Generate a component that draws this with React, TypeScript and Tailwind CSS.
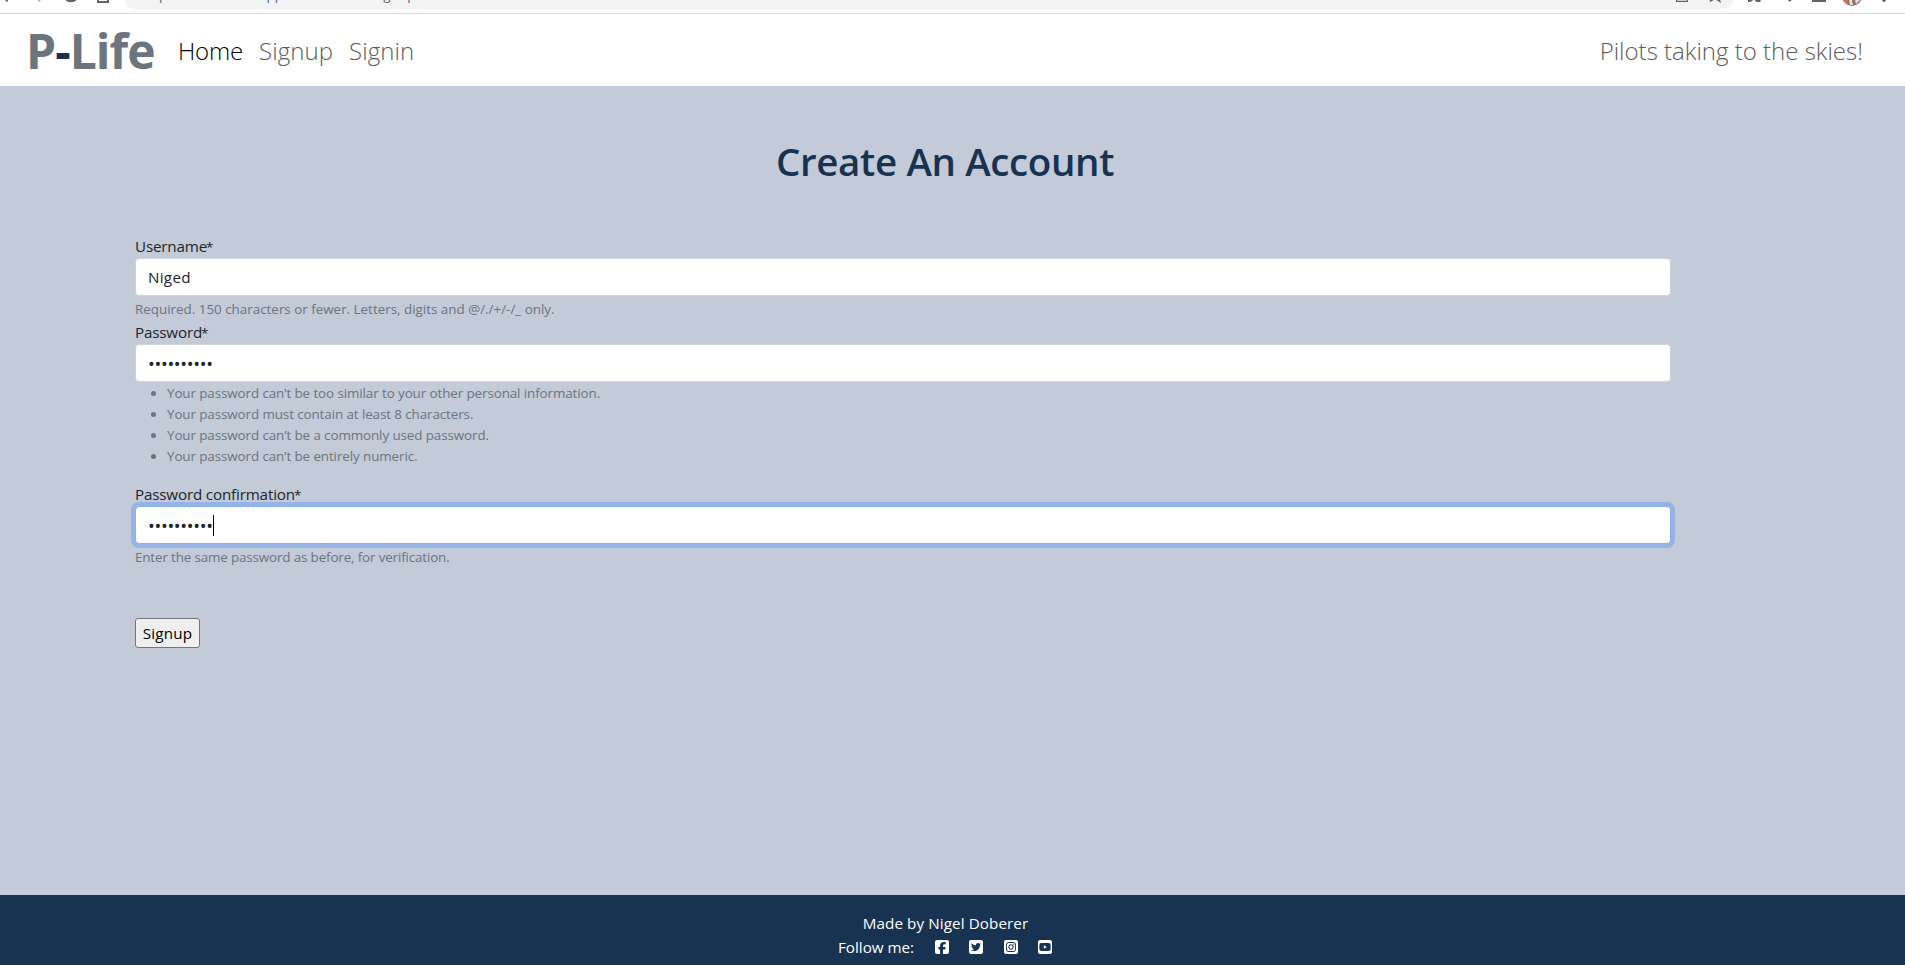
import React from "react";
import type { ReactNode } from "react";
import { FaSquareFacebook, FaSquareTwitter, FaSquareInstagram, FaSquareYoutube } from "react-icons/fa6";

const hints = [
  "Your password can’t be too similar to your other personal information.",
  "Your password must contain at least 8 characters.",
  "Your password can’t be a commonly used password.",
  "Your password can’t be entirely numeric.",
];

const socials = [FaSquareFacebook, FaSquareTwitter, FaSquareInstagram, FaSquareYoutube];

function BrowserBar() {
  return (
    <div className="flex h-[14px] shrink-0 overflow-hidden border-b border-[#d9dbde] bg-white">
      <svg className="h-[9px] w-[125px] shrink-0" viewBox="0 0 125 9" fill="none" stroke="#5f6368" strokeWidth="2">
        <path d="M4 -3L7.500 1.500" />
        <path d="M42 -3L38.500 1.500" stroke="#b5b8bb" />
        <path d="M65.500 0H76.500C74 3 68 3 65.500 0Z" fill="#5f6368" stroke="none" />
        <path d="M98 -6V2H108V-6" />
      </svg>
      <div className="flex h-[9px] w-[1608px] shrink-0 overflow-hidden rounded-b-[14px] bg-[#f1f3f4]">
        <span className="-mt-[14px] ml-[34px] block w-max text-[13.4px] leading-[18px] tracking-[0.06px] text-[#5f6368]">
          pilot-life.herokuapp.com/account/signup/
        </span>
        <svg className="mr-[8px] ml-auto h-[9px] w-[52px]" viewBox="0 0 52 9" fill="none" stroke="#5f6368" strokeWidth="1.2">
          <path d="M3.6 -4V1.4H14.4V-4" />
          <path d="M37 1.500L38.500 -2M37 1.500L42 -1.500L47 1.500L45.500 -2" />
        </svg>
      </div>
      <svg className="h-[9px] w-[172px] shrink-0" viewBox="0 0 172 9" fill="#5f6368">
        <path d="M15 0h4.500v1.200h-1.200l-.8.9h-2.500zM22 0h5.500v2.100h-3.500l-.8-.9h-1.200z" />
        <path d="M55 0h3.500l-1 1.500h-1.500z" />
        <path d="M79 0h14v2h-14z" />
        <circle cx="119" cy="-4" r="10" fill="#8c7168" />
        <path d="M110 0h4l1 4c-2 0-4-2-5-4z" fill="#d9774f" />
        <path d="M116 0h3l1 5h-3zM122 0h5l-4 4z" fill="#e6dfd4" />
        <circle cx="151" cy="0" r="1.900" />
      </svg>
    </div>
  );
}

function Dots() {
  return <span className="pt-[2px] text-[18px] leading-6 tracking-[-0.3px]">••••••••••</span>;
}

function Label({ children }: { children: ReactNode }) {
  return <div className="h-6 text-[15.2px] leading-6 tracking-[-0.17px] text-[#212529]">{children}<span className="-ml-[1px] text-[13.500px]">*</span></div>;
}

export default function App() {
  return (
    <div className="flex h-[965px] w-[1905px] flex-col overflow-hidden bg-[#c3cad8] font-['Open_Sans','Noto_Sans',sans-serif] text-[#212529]">
      <BrowserBar />
      <nav className="flex h-[72px] shrink-0 items-center bg-white">
        <span className="ml-[26px] w-[152px] pt-[2px] text-[48px] font-bold tracking-[-0.95px] text-[#6c757d]">P<span className="text-[#183252]">-</span>Life</span>
        <span className="w-[81px] pt-px text-[24px] font-light tracking-[-0.2px] text-black">Home</span>
        <span className="w-[90px] pt-px text-[24px] font-light tracking-[0.1px] text-[#5c5c5c]">Signup</span>
        <span className="pt-px text-[24px] font-light tracking-[0.1px] text-[#5c5c5c]">Signin</span>
        <span className="mr-[42px] ml-auto pt-px text-[24px] font-light text-[#5c5c5c]">Pilots taking to the skies!</span>
      </nav>
      <main className="flex flex-1 flex-col">
        <h1 className="mt-[51px] ml-[776px] text-[38.5px] leading-[48px] font-semibold tracking-[-0.36px] text-[#183252]">Create An Account</h1>
        <form className="mt-[49px] ml-[135px] w-[1536px] text-[#6c757d]">
          <Label>Username</Label>
          <div className="h-[38px] rounded border border-[#ced4da] bg-white px-3 py-[6px] text-[15.2px] leading-6 tracking-[0.3px] text-[#212529]">Niged</div>
          <div className="h-6 pt-[2px] text-[13.4px] leading-[22px]">Required. 150 characters or fewer. Letters, digits and @/./+/-/_ only.</div>
          <Label>Password</Label>
          <div className="flex h-[38px] items-center rounded border border-[#ced4da] bg-white px-3 text-[#212529]"><Dots /></div>
          <ul className="mb-[15px] list-disc pt-px pl-8 text-[13.4px] leading-[21px] tracking-[-0.09px]">{hints.map((h) => <li key={h}>{h}</li>)}</ul>
          <Label>Password confirmation</Label>
          <div className="flex h-[38px] items-center rounded border border-[#86b0f5] bg-white px-3 text-[#212529] ring-4 ring-[#95b3e4]">
            <Dots />
            <span className="h-[21px] w-px bg-black" />
          </div>
          <div className="h-6 pt-[2px] text-[13.4px] leading-[22px] tracking-[-0.14px]">Enter the same password as before, for verification.</div>
          <button type="button" className="mt-[50px] flex h-[30px] w-[65px] items-center justify-center rounded-[3px] border border-[#767676] bg-[#efefef] text-[15.2px] tracking-[0.2px] text-black">Signup</button>
        </form>
      </main>
      <footer className="flex h-[70px] shrink-0 flex-col items-center bg-[#183252] pt-4 pr-[14px] text-[15.2px] leading-6 text-white">
        <span className="tracking-[0.1px]">Made by Nigel Doberer</span>
        <span className="flex items-center">
          Follow me:
          <span className="ml-[20px] flex gap-[18.3px]">
            {socials.map((Icon, i) => <Icon key={i} className="size-4" />)}
          </span>
        </span>
      </footer>
    </div>
  );
}
